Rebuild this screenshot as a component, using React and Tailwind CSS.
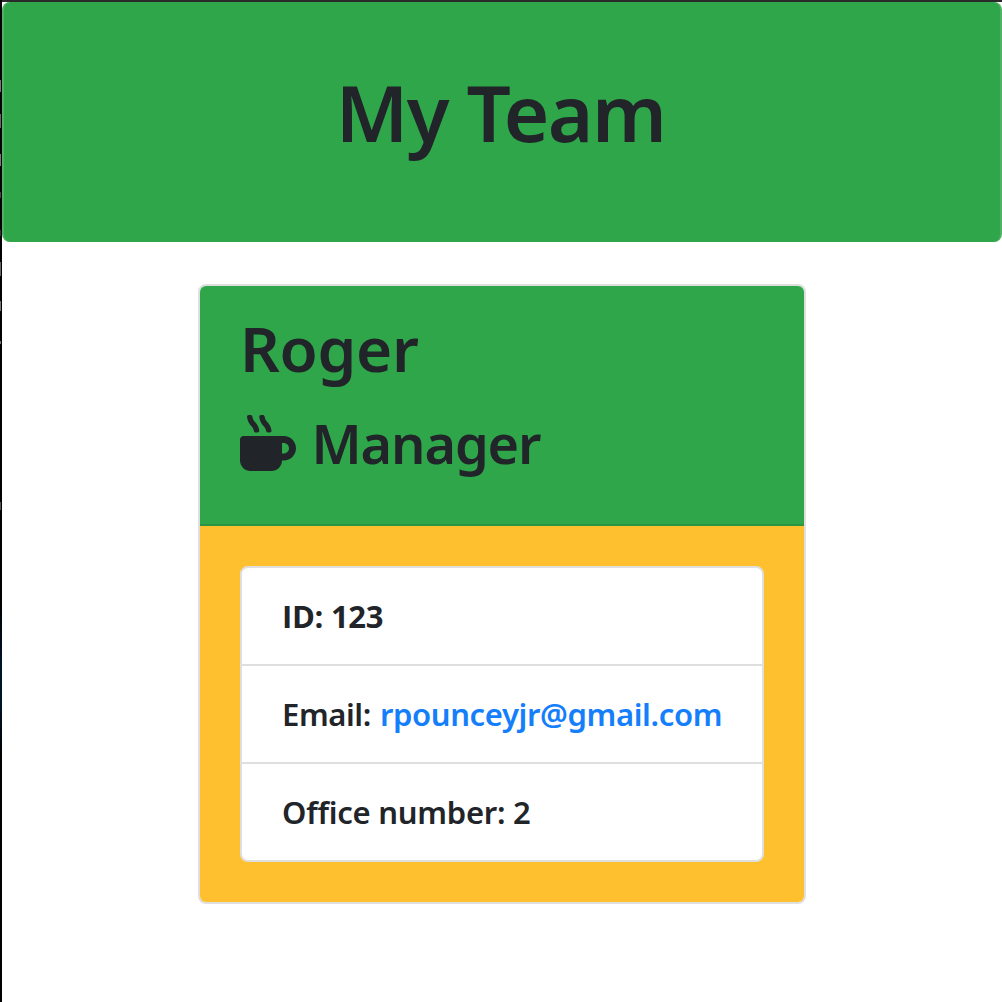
import { FaMugHot } from "react-icons/fa";

const details = [
  { label: "ID: 123", style: "font-['Open_Sans',sans-serif] font-bold tracking-[-0.3px]" },
  { label: "Email:", email: "rpounceyjr@gmail.com", style: "tracking-[-0.4px]" },
  { label: "Office number: 2", style: "tracking-[-0.25px]" },
];

function EdgeMarks() {
  return (
    <div className="h-[1002px] w-0.5 shrink-0 bg-[linear-gradient(#050507_0,#000_600px,#00142b_670px,#00142b_700px,#000_760px)]">
      <div className="w-px pt-20">
        <div className="h-3 bg-[#777]" />
        <div className="mt-[22px] h-3.5 bg-[#666]" />
        <div className="mt-[26px] h-3 bg-[#777]" />
        <div className="mt-[26px] h-1.5 bg-[#444]" />
        <div className="mt-8 h-1.5 bg-[#333]" />
        <div className="mt-[26px] h-3.5 bg-[#666]" />
        <div className="mt-[25px] h-2.5 bg-[#777]" />
        <div className="mt-[30px] h-[3px] bg-[#777]" />
        <div className="mt-[158px] h-2 bg-[#555]" />
      </div>
    </div>
  );
}

export default function App() {
  return (
    <div className="flex h-[1002px] w-[1002px] overflow-hidden bg-white font-['Noto_Sans',sans-serif] text-[#212529]">
      <EdgeMarks />
      <div className="flex w-[1000px] flex-col">
        <div className="h-0.5 bg-[#2a2a2b]" />
        <header className="flex h-60 items-start justify-center rounded-lg border-x-2 border-[#51b167] bg-[#30a64a] pr-[3px] pt-[62px]">
          <h1 className="whitespace-nowrap text-[78px] font-semibold leading-[96px] tracking-[-1.6px]">My Team</h1>
        </header>
        <main className="ml-[196px] mt-[42px] w-[608px] rounded-lg border-2 border-[#dfdfdf]">
          <div className="h-60 rounded-t-md border-b-2 border-[#2b9543] bg-[#30a64a] px-10 pt-6">
            <h2 className="whitespace-nowrap text-[62px] font-semibold leading-[76px] tracking-[-0.3px]">Roger</h2>
            <div className="mt-[23px] flex h-[68px] items-start">
              <FaMugHot className="-ml-[0.5px] mt-1.5 size-14" />
              <h3 className="ml-4 whitespace-nowrap text-[54px] font-semibold leading-[68px] tracking-[-1.1px]">Manager</h3>
            </div>
          </div>
          <div className="rounded-b-md bg-[#ffc02f] p-10">
            <ul className="divide-y-2 divide-[#dfdfdf] rounded-lg border-2 border-[#dfdfdf] bg-white text-[31px] font-semibold leading-[48px]">
              {details.map((item) => (
                <li key={item.label} className="flex h-[98px] items-center whitespace-nowrap px-10 pb-px last:h-24">
                  <span className={item.style}>{item.label}</span>
                  {item.email && <a className="ml-[9px] tracking-[-0.37px] text-[#147efb]">{item.email}</a>}
                </li>
              ))}
            </ul>
          </div>
        </main>
      </div>
    </div>
  );
}
